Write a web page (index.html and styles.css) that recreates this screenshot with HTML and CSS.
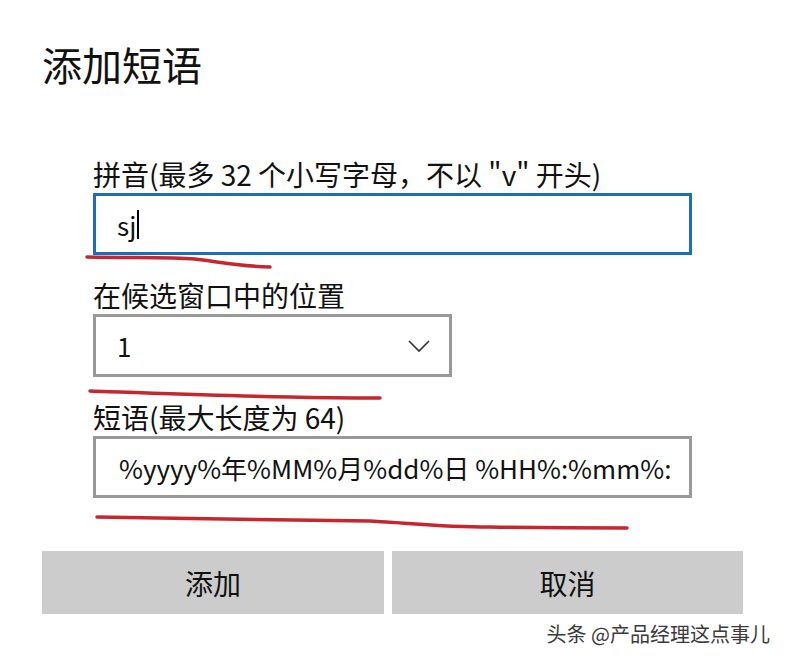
FILE: index.html
```html
<!DOCTYPE html>
<html lang="zh-CN">
<head>
<meta charset="utf-8">
<title>添加短语</title>
<link rel="stylesheet" href="styles.css">
</head>
<body>
<div class="dialog">
  <h1 class="title">添加短语</h1>
  <div class="fields">
    <div class="field">
      <div class="label">拼音(最多 32 个小写字母，不以 "v" 开头)</div>
      <div class="box box-focus"><span class="value">sj</span><span class="caret"></span></div>
    </div>
    <div class="field">
      <div class="label">在候选窗口中的位置</div>
      <div class="box box-select">
        <span class="value">1</span>
        <svg class="chevron" width="22" height="14" viewBox="0 0 22 14"><path d="M1 2 L11 12 L21 2" fill="none" stroke="#333" stroke-width="1.6"/></svg>
      </div>
    </div>
    <div class="field">
      <div class="label">短语(最大长度为 64)</div>
      <div class="box box-plain"><span class="value">%yyyy%年%MM%月%dd%日 %HH%:%mm%:</span></div>
    </div>
  </div>
  <div class="buttons">
    <div class="btn btn-add">添加</div>
    <div class="btn btn-cancel">取消</div>
  </div>
</div>
<svg class="marks" width="789" height="659" viewBox="0 0 789 659">
  <path d="M87 257 C 130 258, 170 257, 195 259 C 215 261, 235 266, 270 267" />
  <path d="M90 391 C 150 393, 220 396, 290 397 C 330 398, 360 398, 380 398" />
  <path d="M97 517 C 200 519, 320 520, 370 521 C 410 523, 440 527, 490 527 C 560 528, 600 528, 627 528" />
</svg>
<div class="watermark">头条 @产品经理这点事儿</div>
</body>
</html>
```

FILE: styles.css
```css
html, body {
  margin: 0;
  padding: 0;
  background: #ffffff;
}
body {
  width: 789px;
  height: 659px;
  position: relative;
  overflow: hidden;
  font-family: "Noto Sans CJK SC", "Noto Sans", sans-serif;
  color: #111;
}
.dialog {
  padding: 40px 46px 0 42px;
}
.title {
  margin: 0;
  font-size: 40px;
  font-weight: 400;
  line-height: 49px;
  color: #111;
}
.fields {
  margin-top: 69px;
  padding-left: 51px;
  width: 599px;
  display: flex;
  flex-direction: column;
  gap: 24px;
}
.label {
  font-size: 28px;
  line-height: 32px;
  margin-bottom: 3px;
  white-space: nowrap;
}
.box {
  box-sizing: border-box;
  height: 62px;
  border: 3px solid #999999;
  display: flex;
  align-items: center;
  padding-left: 21px;
  font-size: 26px;
  overflow: hidden;
  white-space: nowrap;
  background: #fff;
}
.box-focus {
  border-color: #1a6fb8;
}
.box-select {
  width: 359px;
  height: 63px;
  justify-content: space-between;
  padding-right: 19px;
}
.box-plain {
  padding-left: 23px;
}
.caret {
  display: inline-block;
  width: 2px;
  height: 29px;
  background: #000;
  margin-left: 1px;
}
.chevron {
  display: block;
}
.buttons {
  margin-top: 53px;
  display: grid;
  grid-template-columns: 342px 351px;
  gap: 8px;
}
.btn {
  height: 63px;
  background: #cccccc;
  display: flex;
  align-items: center;
  justify-content: center;
  font-size: 28px;
  color: #111;
}
.marks {
  position: absolute;
  left: 0;
  top: 0;
  pointer-events: none;
}
.marks path {
  fill: none;
  stroke: #c8262e;
  stroke-width: 3.5;
  stroke-linecap: round;
}
.watermark {
  position: absolute;
  right: 19px;
  bottom: 13px;
  font-size: 20px;
  line-height: 24px;
  color: #3a3a3a;
  text-shadow: 0 0 2px #fff;
}
```
